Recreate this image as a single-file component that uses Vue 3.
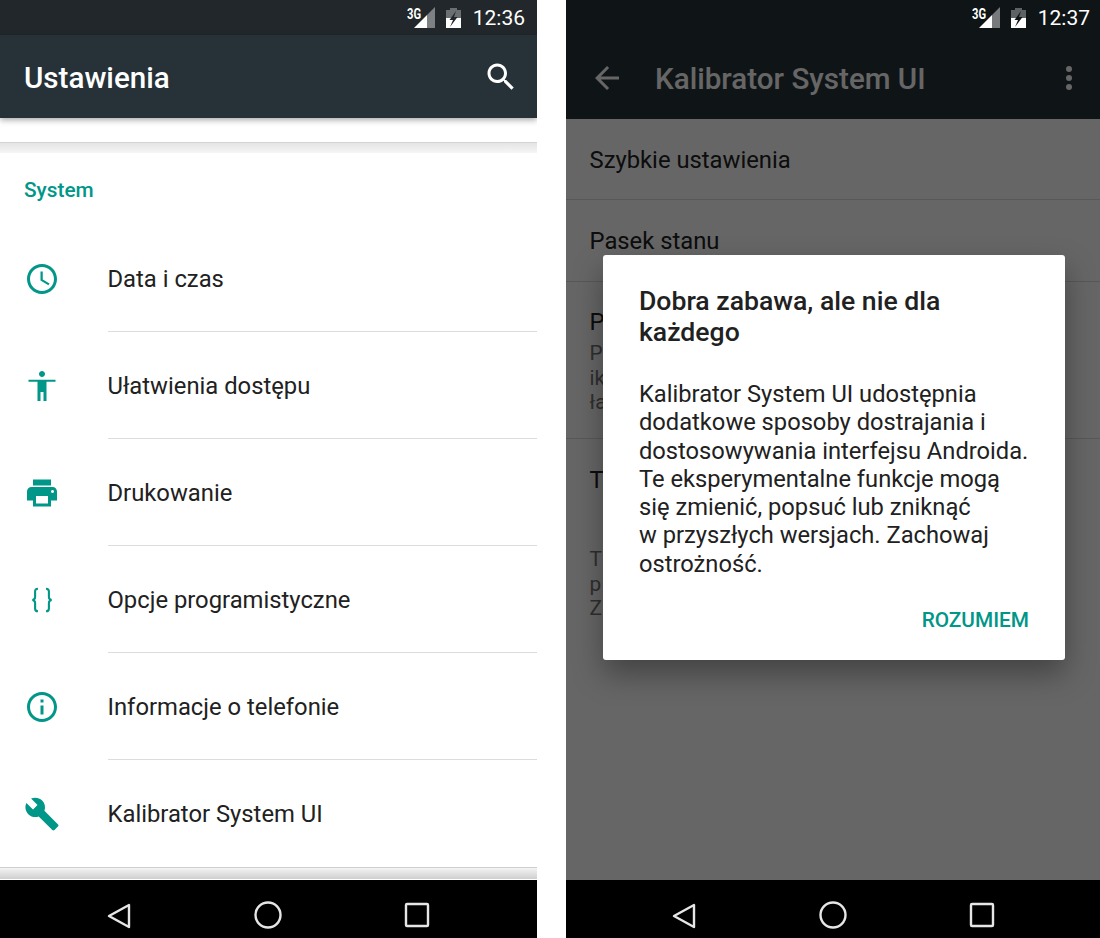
<template>
  <div class="page">
    <!-- left phone: settings list -->
    <div class="phone phone-left">
      <div class="status">
        <div class="signal">
          <span class="net">3G</span>
          <svg width="21" height="21" viewBox="0 0 21 21">
            <path d="M21 0V21H13V8Z" fill="#7d8183" />
            <path d="M13 8V21H0Z" fill="#fff" />
          </svg>
        </div>
        <svg class="battery" width="15" height="20" viewBox="0 0 15 20">
          <path d="M4 0H11V2H15V20H0V2H4Z" fill="#6b6f72" />
          <path d="M0 10H15V20H0Z" fill="#fff" />
          <path d="M10 3L3.5 12H7L4 19L11.5 9H8Z" fill="#21272b" />
        </svg>
        <span class="clock">12:36</span>
      </div>
      <div class="appbar">
        <span class="title">Ustawienia</span>
        <svg class="search" width="36" height="36" viewBox="0 0 24 24" fill="#fff">
          <path d="M15.5 14h-.79l-.28-.27C15.41 12.59 16 11.11 16 9.5 16 5.91 13.09 3 9.5 3S3 5.91 3 9.5 5.91 16 9.5 16c1.61 0 3.09-.59 4.23-1.57l.27.28v.79l5 4.99L20.49 19l-4.99-5zm-6 0C7.01 14 5 11.99 5 9.5S7.01 5 9.5 5 14 7.01 14 9.5 11.99 14 9.5 14z" />
        </svg>
      </div>
      <div class="content">
        <div class="band"></div>
        <div class="section">System</div>
        <div v-for="item in settings" :key="item.label" class="row">
          <svg class="icon" width="36" height="36" viewBox="0 0 24 24">
            <path
              v-if="item.icon"
              :d="item.icon"
              fill="#009688"
            />
            <path
              v-else
              d="M9.3 4.5C7.9 4.5 7.4 5.2 7.4 6.4V10C7.4 11.1 6.8 11.8 5.6 12C6.8 12.2 7.4 12.9 7.4 14V17.6C7.4 18.8 7.9 19.5 9.3 19.5M14.7 4.5C16.1 4.5 16.6 5.2 16.6 6.4V10C16.6 11.1 17.2 11.8 18.4 12C17.2 12.2 16.6 12.9 16.6 14V17.6C16.6 18.8 16.1 19.5 14.7 19.5"
              fill="none"
              stroke="#009688"
              stroke-width="1.4"
            />
          </svg>
          <div class="row-text">{{ item.label }}</div>
        </div>
        <div class="band band-bottom"></div>
      </div>
      <div class="navbar">
        <svg width="24" height="26" viewBox="0 0 24 26" class="nav-back">
          <path d="M22 2V24L2 13Z" fill="none" stroke="#e6e6e6" stroke-width="2.4" stroke-linejoin="round" />
        </svg>
        <svg width="28" height="28" viewBox="0 0 28 28" class="nav-home">
          <circle cx="14" cy="14" r="12.5" fill="none" stroke="#e6e6e6" stroke-width="2.4" />
        </svg>
        <svg width="26" height="26" viewBox="0 0 26 26" class="nav-recent">
          <rect x="2" y="2" width="22" height="22" rx="1" fill="none" stroke="#e6e6e6" stroke-width="2.4" />
        </svg>
      </div>
    </div>

    <!-- right phone: tuner with the warning dialog -->
    <div class="phone phone-right">
      <div class="status status-dim">
        <div class="signal">
          <span class="net">3G</span>
          <svg width="21" height="21" viewBox="0 0 21 21">
            <path d="M21 0V21H13V8Z" fill="#77797a" />
            <path d="M13 8V21H0Z" fill="#fff" />
          </svg>
        </div>
        <svg class="battery" width="15" height="20" viewBox="0 0 15 20">
          <path d="M4 0H11V2H15V20H0V2H4Z" fill="#5f6264" />
          <path d="M0 10H15V20H0Z" fill="#fff" />
          <path d="M10 3L3.5 12H7L4 19L11.5 9H8Z" fill="#0f1416" />
        </svg>
        <span class="clock">12:37</span>
      </div>
      <div class="stage">
        <div class="appbar appbar-tuner">
          <svg class="back" width="36" height="36" viewBox="0 0 24 24" fill="#fff">
            <path d="M20 11H7.83l5.59-5.59L12 4l-8 8 8 8 1.41-1.41L7.83 13H20v-2z" />
          </svg>
          <span class="title">Kalibrator System UI</span>
          <div class="dots"><i></i><i></i><i></i></div>
        </div>
        <div class="tuner">
          <div class="t-row t-quick">Szybkie ustawienia</div>
          <div class="t-row t-bar">Pasek stanu</div>
          <div class="t-row t-percent">
            <div>P</div>
            <div class="t-sub">P<br />ik<br />ła</div>
          </div>
          <div class="t-row t-last">
            <div>T</div>
            <div class="t-sub t-sub-far">T<br />p<br />Z</div>
          </div>
        </div>
        <div class="scrim"></div>
        <div class="dialog">
          <div class="dialog-title">Dobra zabawa, ale nie dla<br />każdego</div>
          <div class="dialog-body">
            Kalibrator System UI udostępnia<br />
            dodatkowe sposoby dostrajania i<br />
            dostosowywania interfejsu Androida.<br />
            Te eksperymentalne funkcje mogą<br />
            się zmienić, popsuć lub zniknąć<br />
            w przyszłych wersjach. Zachowaj<br />
            ostrożność.
          </div>
          <div class="dialog-actions">ROZUMIEM</div>
        </div>
      </div>
      <div class="navbar navbar-right">
        <svg width="24" height="26" viewBox="0 0 24 26" class="nav-back">
          <path d="M22 2V24L2 13Z" fill="none" stroke="#e6e6e6" stroke-width="2.4" stroke-linejoin="round" />
        </svg>
        <svg width="28" height="28" viewBox="0 0 28 28" class="nav-home">
          <circle cx="14" cy="14" r="12.5" fill="none" stroke="#e6e6e6" stroke-width="2.4" />
        </svg>
        <svg width="26" height="26" viewBox="0 0 26 26" class="nav-recent">
          <rect x="2" y="2" width="22" height="22" rx="1" fill="none" stroke="#e6e6e6" stroke-width="2.4" />
        </svg>
      </div>
    </div>
  </div>
</template>

<script setup>
const settings = [
  {
    label: "Data i czas",
    icon: "M11.99 2C6.47 2 2 6.48 2 12s4.47 10 9.99 10C17.52 22 22 17.52 22 12S17.52 2 11.99 2zM12 20c-4.42 0-8-3.58-8-8s3.58-8 8-8 8 3.58 8 8-3.58 8-8 8zm.5-13H11v6l5.25 3.15.75-1.23-4.5-2.67z",
  },
  {
    label: "Ułatwienia dostępu",
    icon: "M12 2c1.1 0 2 .9 2 2s-.9 2-2 2-2-.9-2-2 .9-2 2-2zm9 7.2h-6V22h-2v-6h-2v6H9V9.2H3V7.8h18v1.4z",
  },
  {
    label: "Drukowanie",
    icon: "M19 8H5c-1.66 0-3 1.34-3 3v6h4v4h12v-4h4v-6c0-1.66-1.34-3-3-3zm-3 11H8v-5h8v5zm3-7c-.55 0-1-.45-1-1s.45-1 1-1 1 .45 1 1-.45 1-1 1zm-1-9H6v4h12V3z",
  },
  { label: "Opcje programistyczne", icon: "" },
  {
    label: "Informacje o telefonie",
    icon: "M11 17h2v-6h-2v6zm1-15C6.48 2 2 6.48 2 12s4.48 10 10 10 10-4.48 10-10S17.52 2 12 2zm0 18c-4.41 0-8-3.59-8-8s3.59-8 8-8 8 3.59 8 8-3.59 8-8 8zM11 9h2V7h-2v2z",
  },
  {
    label: "Kalibrator System UI",
    icon: "M22.7 19l-9.1-9.1c.9-2.3.4-5-1.5-6.9-2-2-5-2.4-7.4-1.3L9 6 6 9 1.6 4.7C.4 7.1.9 10.1 2.9 12.1c1.9 1.9 4.6 2.4 6.9 1.5l9.1 9.1c.4.4 1 .4 1.4 0l2.3-2.3c.5-.4.5-1.1.1-1.4z",
  },
];
</script>

<style>
body {
  background: #fff;
}
</style>

<style scoped>
.page {
  display: flex;
  justify-content: space-between;
  width: 1100px;
  height: 938px;
  overflow: hidden;
  background: #fff;
  font-family: Roboto, "Liberation Sans", sans-serif;
}

.phone {
  display: flex;
  flex-direction: column;
  height: 938px;
  overflow: hidden;
}

.phone-left {
  width: 537px;
}

.phone-right {
  width: 534px;
}

/* status bar */
.status {
  display: flex;
  align-items: center;
  justify-content: flex-end;
  flex: none;
  height: 35px;
  padding-right: 12px;
  background: #21272b;
  color: #fff;
}

.status-dim {
  height: 36px;
  padding-right: 10px;
  background: #0f1416;
}

.signal {
  position: relative;
  display: flex;
  margin-right: 11px;
  margin-top: -1px;
}

.net {
  position: absolute;
  top: 1px;
  left: -7px;
  font-size: 14px;
  font-weight: 700;
  line-height: 12px;
  transform: scaleX(0.8);
  transform-origin: left;
}

.battery {
  margin-right: 12px;
}

.clock {
  font-size: 21px;
  line-height: 24px;
}

/* app bars */
.appbar {
  position: relative;
  z-index: 1;
  display: flex;
  align-items: center;
  flex: none;
  height: 83px;
  padding-left: 24px;
  padding-right: 18px;
  background: #263238;
  box-shadow: 0 2px 6px rgba(0, 0, 0, 0.35);
  color: #fff;
}

.title {
  padding-top: 2px;
  font-size: 29.6px;
  font-weight: 500;
}

.search {
  margin-left: auto;
}

.appbar-tuner {
  padding-left: 23px;
  padding-right: 0;
  box-shadow: none;
}

.back {
  margin-right: 30px;
}

.dots {
  display: flex;
  flex-direction: column;
  gap: 3px;
  margin-left: auto;
  margin-right: 28px;
}

.dots i {
  width: 6px;
  height: 6px;
  border-radius: 50%;
  background: #fff;
}

/* settings list */
.content {
  flex: 1;
  padding-top: 24px;
  background: #fff;
}

.band {
  height: 11px;
  border-top: 1px solid #d4d4d4;
  box-sizing: border-box;
  background: linear-gradient(#e4e4e4, #f6f6f6);
}

.section {
  height: 72px;
  padding: 24px 24px 0;
  box-sizing: border-box;
  color: #009688;
  font-size: 20.8px;
  font-weight: 500;
  line-height: 26px;
}

.row {
  display: flex;
  height: 107px;
  padding-left: 24px;
}

.icon {
  flex: none;
  align-self: center;
}

.row-text {
  display: flex;
  align-items: center;
  flex: 1;
  margin-left: 47.5px;
  padding-top: 1px;
  border-bottom: 1px solid #dcdcdc;
  box-sizing: border-box;
  color: #212121;
  font-size: 23.8px;
}

.row:nth-last-child(2) .row-text {
  border-bottom: none;
}

.band-bottom {
  height: 12px;
  border-top: 1px solid #cfcfcf;
  background: linear-gradient(#f4f4f4, #cfcfcf);
}

/* nav bar */
.navbar {
  position: relative;
  flex: none;
  height: 58px;
  background: #000;
}

.navbar svg {
  position: absolute;
}

.nav-back {
  left: 107px;
  top: 23px;
}

.nav-home {
  left: 254px;
  top: 21px;
}

.nav-recent {
  left: 404px;
  top: 22px;
}

.navbar-right .nav-back {
  left: 106px;
}

.navbar-right .nav-home {
  left: 253px;
}

.navbar-right .nav-recent {
  left: 403px;
}

/* tuner list + dialog */
.stage {
  position: relative;
  flex: 1;
  display: flex;
  flex-direction: column;
  background: #fff;
}

.tuner {
  flex: 1;
  color: #212121;
  font-size: 23.8px;
}

.t-row {
  padding-left: 23.5px;
  border-bottom: 1px solid #dcdcdc;
  box-sizing: border-box;
}

.t-quick {
  height: 81px;
  padding-top: 27px;
  line-height: 28px;
}

.t-bar {
  height: 82px;
  padding-top: 28px;
  line-height: 26px;
}

.t-percent {
  height: 157px;
  padding-top: 25px;
  line-height: 30px;
}

.t-last {
  padding-top: 26px;
  border-bottom: none;
  line-height: 30px;
}

.t-sub {
  margin-top: 4px;
  color: #757575;
  font-size: 20.8px;
  line-height: 24.5px;
}

.t-sub-far {
  margin-top: 52px;
}

.scrim {
  position: absolute;
  inset: 0;
  z-index: 2;
  background: rgba(0, 0, 0, 0.6);
}

.dialog {
  position: absolute;
  top: 219px;
  left: 37px;
  z-index: 3;
  width: 462px;
  height: 405px;
  padding: 30px 36px 0;
  box-sizing: border-box;
  border-radius: 3px;
  background: #fff;
  box-shadow: 0 14px 30px rgba(0, 0, 0, 0.35);
}

.dialog-title {
  color: #212121;
  font-size: 26.6px;
  font-weight: 500;
  line-height: 31px;
}

.dialog-body {
  margin-top: 33px;
  color: #212121;
  font-size: 23.7px;
  line-height: 28.3px;
  white-space: nowrap;
}

.dialog-actions {
  margin-top: 29px;
  color: #009688;
  font-size: 20.8px;
  font-weight: 500;
  line-height: 26px;
  text-align: right;
}
</style>
